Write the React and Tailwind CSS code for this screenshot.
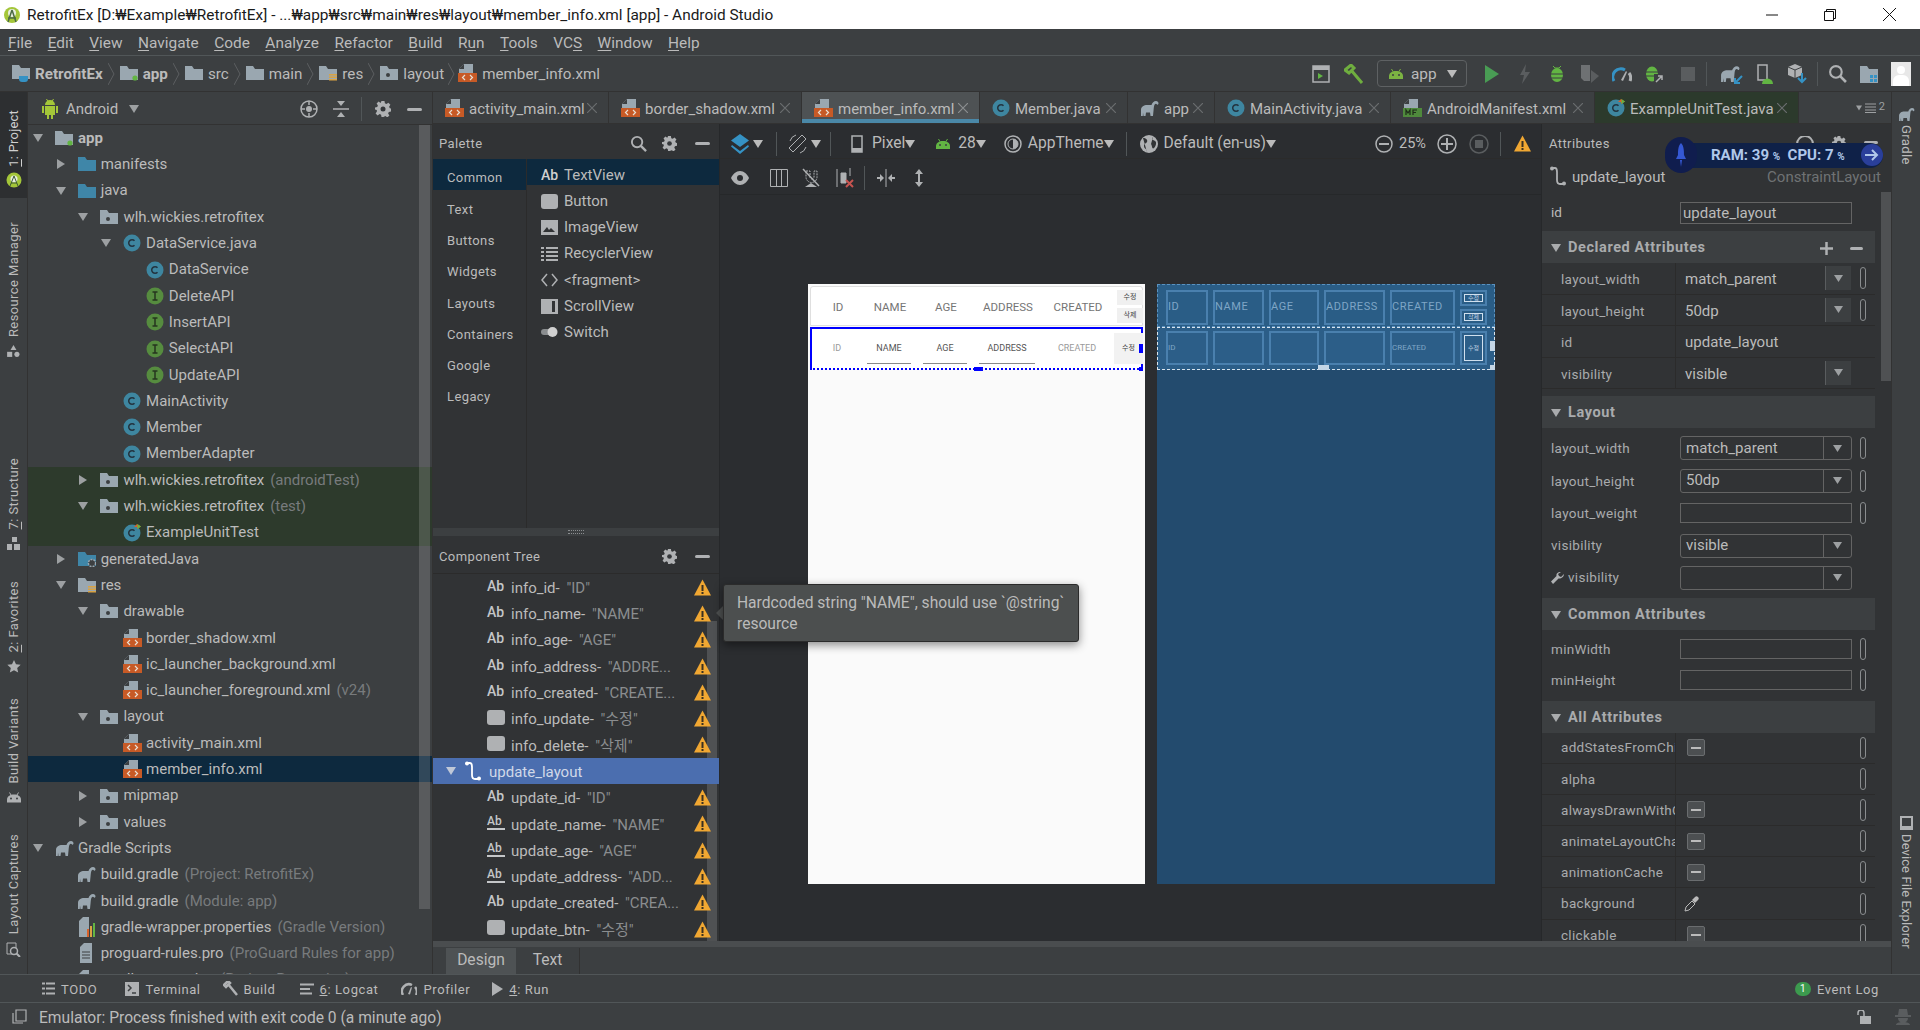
import { Fragment } from 'react'

const FONT = "font-['Roboto','Noto_Sans_CJK_KR',sans-serif]"

function Caret({ dir = 'down', c = '#9da0a2', s = 10 }) {
  return (
    <svg width={s} height={s} viewBox="0 0 10 10" className="shrink-0">
      <path d={dir === 'down' ? 'M0 1h10L5 9z' : 'M1 0v10l8-5z'} fill={c} />
    </svg>
  )
}

function Folder({ c = '#9aa7b0', dot, sub }) {
  return (
    <svg width="18" height="16" viewBox="0 0 18 16" className="shrink-0">
      <path d="M0 1h7l2 3h9v11H0z" fill={c} />
      {dot && <circle cx="8" cy="10" r="2" fill="#3c3f41" />}
      {sub === 'green' && <circle cx="15" cy="13" r="2.6" fill="#62b543" />}
      {sub === 'res' && <path d="M10 9h8v1.5h-8zM10 11.5h8V13h-8zM10 14h8v1.5h-8z" fill="#d9a343" />}
      {sub === 'gear' && <circle cx="14" cy="12" r="3.6" fill="#3c3f41" stroke="#9aa7b0" strokeWidth="1.5" strokeDasharray="2 1" />}
    </svg>
  )
}

function Xml() {
  return (
    <svg width="19" height="18" viewBox="0 0 19 18" className="shrink-0">
      <path d="M6 0h9v9H1V5z" fill="#9aa7b0" />
      <path d="M6 0v5H1z" fill="#3c3f41" />
      <rect y="9" width="19" height="9" fill="#c75a26" />
      <path d="M7 11l-2.500 2.500L7 16M12 11l2.500 2.500L12 16" fill="none" stroke="#e9e0d5" strokeWidth="1.200" />
    </svg>
  )
}

function Manifest() {
  return (
    <svg width="19" height="18" viewBox="0 0 19 18" className="shrink-0">
      <path d="M6 0h9v9H1V5z" fill="#9aa7b0" />
      <path d="M6 0v5H1z" fill="#3c3f41" />
      <rect y="9" width="19" height="9" fill="#4f8a3c" />
      <path d="M3 16v-5l2 3 2-3v5M10 16v-5h4M10 13.500h3" fill="none" stroke="#1e2c1a" strokeWidth="1.200" />
    </svg>
  )
}

function ClassIcon({ test }) {
  return (
    <svg width="18" height="18" viewBox="0 0 18 18" className="shrink-0">
      <circle cx="9" cy="9" r="8.500" fill="#3e86a0" />
      <path d="M11.500 6.800A3.300 3.300 0 1 0 11.500 11.200" fill="none" stroke="#23343f" strokeWidth="1.500" />
      {test && <path d="M11 3l3-3v3zM14 0l4 2.500L14 5z" fill="#d9622b" />}
      {test && <path d="M14.500 0l3.500 2.500-3.500 2.500z" fill="#62b543" />}
    </svg>
  )
}

function InterfaceIcon() {
  return (
    <svg width="18" height="18" viewBox="0 0 18 18" className="shrink-0">
      <circle cx="9" cy="9" r="8.500" fill="#568c3f" />
      <path d="M6.500 5h5M6.500 13h5M9 5v8" fill="none" stroke="#26351f" strokeWidth="1.500" />
    </svg>
  )
}

function Gradle({ c = '#9aa7b0', w = 19, h = 16 }) {
  return (
    <svg width={w} height={h} viewBox="0 0 19 16" className="shrink-0">
      <path d="M1 16V10C1 6.500 4 5 7 5h4.500C12 3 14 1 16 1c1.500 0 2.500 1 2.500 2.300 0 1-.7 1.700-1.400 1.400-.5-1.300-1.800-1.300-2.600 0-.8 1.500-.6 4.300-1.500 11.300h-2.500l-.5-3.500H6L5.500 16h-2L3 12.500 2.800 16z" fill={c} />
    </svg>
  )
}

function Android({ c = '#7cb342', w = 16, h = 10 }) {
  return (
    <svg width={w} height={h} viewBox="0 0 16 10" className="shrink-0">
      <path d="M1 10V7c0-3 3-5 7-5s7 2 7 5v3z" fill={c} />
      <path d="M3.500 0l1.500 2.500M12.500 0L11 2.500" stroke={c} strokeWidth="1" />
      <circle cx="5" cy="6" r="1" fill="#3c3f41" />
      <circle cx="11" cy="6" r="1" fill="#3c3f41" />
    </svg>
  )
}

function AndroidBody() {
  return (
    <svg width="16" height="22" viewBox="0 0 16 22" className="shrink-0">
      <path d="M3 7a5 5 0 0 1 10 0zM3 8h10v9h-2v4H9v-4H7v4H5v-4H3zM0 8h2v7H0zM14 8h2v7h-2z" fill="#a4c639" />
      <path d="M4.500 1l1.500 2.500M11.500 1L10 3.500" stroke="#a4c639" />
    </svg>
  )
}

function FileIcon({ kind }) {
  if (kind === 'props') {
    return (
      <svg width="18" height="20" viewBox="0 0 18 20" className="shrink-0">
        <path d="M5 0h6v20H1V4z" fill="#9aa7b0" />
        <path d="M9 12h2v8H9z" fill="#d9622b" />
        <path d="M12 9h2v11h-2z" fill="#d9a343" />
        <path d="M15 6h2v14h-2z" fill="#62b543" />
      </svg>
    )
  }
  return (
    <svg width="18" height="20" viewBox="0 0 18 20" className="shrink-0">
      <path d="M6 0h8v20H2V4z" fill="#9aa7b0" />
      <path d="M4 9h8M4 12h8M4 15h8" stroke="#3c3f41" />
    </svg>
  )
}

function Warn({ s = 17 }) {
  return (
    <svg width={s} height={s} viewBox="0 0 17 17" className="shrink-0">
      <path d="M8.500 0.500L17 16.500H0z" fill="#f0a732" />
      <path d="M7.500 6h2v6h-2zM7.500 13h2v2h-2z" fill="#3a3020" />
    </svg>
  )
}

function Gear({ s = 16, c = '#afb1b3' }) {
  return (
    <svg width={s} height={s} viewBox="0 0 16 16" className="shrink-0">
      <path d="M6.500 0h3l.4 2.300 1.500.7 2-1.300 2 2-1.300 2 .7 1.500L16 7.500v3l-2.200.4-.7 1.500 1.300 2-2 2-2-1.300-1.500.7L8.500 16h-2l-.4-2.200-1.500-.7-2 1.300-2-2 1.300-2L1.800 9 0 8.500v-2l2.200-.4.7-1.500-1.300-2 2-2 2 1.300L6 1z" fill={c} />
      <circle cx="8" cy="8" r="2.500" fill="#34373a" />
    </svg>
  )
}

function Minus({ w = 15, c = '#afb1b3' }) {
  return <span className="block h-[3px] rounded-sm" style={{ width: w, background: c }} />
}

function Search({ s = 18, c = '#afb1b3' }) {
  return (
    <svg width={s} height={s} viewBox="0 0 18 18" className="shrink-0">
      <circle cx="7.500" cy="7.500" r="5.500" fill="none" stroke={c} strokeWidth="2" />
      <path d="M11.500 11.500L17 17" stroke={c} strokeWidth="2.500" />
    </svg>
  )
}

function Close({ c = '#6a6d6f' }) {
  return (
    <svg width="10" height="10" viewBox="0 0 10 10" className="shrink-0">
      <path d="M0 0l10 10M10 0L0 10" stroke={c} strokeWidth="1.200" />
    </svg>
  )
}

function Chevron() {
  return (
    <svg width="7" height="22" viewBox="0 0 7 22" className="shrink-0">
      <path d="M0 0l6 11-6 11" fill="none" stroke="#5c5f61" />
    </svg>
  )
}

function Constraint({ c = '#afb1b3' }) {
  return (
    <svg width="18" height="20" viewBox="0 0 18 20" className="shrink-0">
      <path d="M3 2h3c2 0 2 2 2 4v8c0 2 1 4 3 4h3" fill="none" stroke={c} strokeWidth="1.800" />
      <circle cx="3" cy="2.500" r="2" fill={c} />
      <circle cx="15" cy="17.500" r="2" fill={c} />
    </svg>
  )
}

const MENU = [
  ['', 'F', 'ile'], ['', 'E', 'dit'], ['', 'V', 'iew'], ['', 'N', 'avigate'], ['', 'C', 'ode'], ['', 'A', 'nalyze'],
  ['', 'R', 'efactor'], ['', 'B', 'uild'], ['R', 'u', 'n'], ['', 'T', 'ools'], ['VC', 'S', ''], ['', 'W', 'indow'], ['', 'H', 'elp'],
]

function TitleBar() {
  return (
    <div className="h-[29px] bg-white flex items-center shrink-0 text-[15.400px] text-[#1a1a1a]">
      <svg width="18" height="20" viewBox="0 0 18 20" className="ml-[3px] mr-[6px]">
        <circle cx="9" cy="10" r="8" fill="#a4c639" />
        <circle cx="9" cy="8" r="4" fill="#e8efe0" />
        <path d="M9 5l-4 12M9 5l4 12M5 13h8" stroke="#4c6b43" strokeWidth="1.500" fill="none" />
      </svg>
      <span className="pt-[2px]">RetrofitEx [D:₩Example₩RetrofitEx] - ...₩app₩src₩main₩res₩layout₩member_info.xml [app] - Android Studio</span>
      <div className="ml-auto flex items-center">
        <svg width="12" height="2" viewBox="0 0 12 2" className="mr-[46px]"><path d="M0 1h12" stroke="#111" /></svg>
        <svg width="12" height="12" viewBox="0 0 12 12" className="mr-[47px]">
          <path d="M.5 2.500h9v9h-9zM2.500 2.500v-2h9v9h-2" fill="none" stroke="#111" />
        </svg>
        <svg width="13" height="13" viewBox="0 0 13 13" className="mr-[24px]"><path d="M0 0l13 13M13 0L0 13" stroke="#111" /></svg>
      </div>
    </div>
  )
}

function MenuBar() {
  return (
    <div className="h-[27px] bg-[#3c3f41] border-b border-[#515658] flex items-center pl-[8px] pt-[3px] gap-[15.500px] text-[15.400px] text-[#bbbbbb] shrink-0">
      {MENU.map(m => (
        <span key={m[1] + m[2]}>{m[0]}<u className="underline-offset-2">{m[1]}</u>{m[2]}</span>
      ))}
    </div>
  )
}

function Crumb({ icon, label, bold, className = '' }) {
  return (
    <div className={'flex items-center ' + className}>
      {icon}
      <span className={'ml-[5px] pt-[2px] text-[15.200px] ' + (bold ? 'font-bold text-[#bbbbbb]' : 'text-[#bbbbbb]')}>{label}</span>
    </div>
  )
}

function ToolIcon({ className, children }) {
  return <div className={'flex items-center justify-center shrink-0 ' + className}>{children}</div>
}

function MainToolbar() {
  return (
    <div className="h-[36px] bg-[#3c3f41] border-b border-[#323232] flex items-center text-[#bbbbbb] shrink-0">
      <Crumb className="ml-[12px]" bold label="RetrofitEx" icon={
        <svg width="18" height="18" viewBox="0 0 18 18"><path d="M0 1h7l2 3h9v11H0z" fill="#9aa7b0" /><path d="M7 12h9v3a3 3 0 0 1-3 3h-3a3 3 0 0 1-3-3z" fill="#3592c4" /></svg>
      } />
      <div className="mx-[5px]"><Chevron /></div>
      <Crumb bold label="app" icon={<Folder sub="green" />} />
      <div className="mx-[5px]"><Chevron /></div>
      <Crumb label="src" icon={<Folder />} />
      <div className="mx-[5px]"><Chevron /></div>
      <Crumb label="main" icon={<Folder />} />
      <div className="ml-[5px] mr-[5px]"><Chevron /></div>
      <Crumb label="res" icon={<Folder sub="res" />} />
      <div className="mx-[5px]"><Chevron /></div>
      <Crumb label="layout" icon={<Folder dot />} />
      <div className="ml-[4px] mr-[3px]"><Chevron /></div>
      <Crumb label="member_info.xml" icon={<Xml />} />

      <div className="ml-auto flex items-center">
        <ToolIcon className="w-[33px]">
          <svg width="18" height="18" viewBox="0 0 18 18"><path d="M1 1h16v16H1z" fill="none" stroke="#afb1b3" strokeWidth="1.500" /><path d="M1 1h16v4H1z" fill="#afb1b3" /><path d="M6 8v6l5-3z" fill="#62b543" /></svg>
        </ToolIcon>
        <ToolIcon className="w-[33px]">
          <svg width="20" height="20" viewBox="0 0 20 20"><path d="M1 6l6-5 3 3-5 5zM7 6l11 13" fill="none" stroke="#6fae3f" strokeWidth="3" /></svg>
        </ToolIcon>
        <div className="ml-[7px] w-[90px] h-[27px] rounded-[4px] border border-[#5e6163] flex items-center pl-[10px]">
          <Android />
          <span className="ml-[7px] pt-[2px] text-[15.400px]">app</span>
          <span className="ml-auto mr-[9px]"><Caret c="#bbbbbb" /></span>
        </div>
        <ToolIcon className="w-[34px] ml-[8px]">
          <svg width="14" height="18" viewBox="0 0 14 18"><path d="M0 0v18l14-9z" fill="#499c54" /></svg>
        </ToolIcon>
        <ToolIcon className="w-[31px]">
          <svg width="12" height="20" viewBox="0 0 12 20"><path d="M7 0L1 11h4l-2 9 8-12H6z" fill="#5a5d5f" /></svg>
        </ToolIcon>
        <ToolIcon className="w-[34px]">
          <svg width="16" height="19" viewBox="0 0 16 19"><path d="M4 2l2 2h4l2-2" stroke="#62b543" fill="none" /><ellipse cx="8" cy="11" rx="6" ry="7" fill="#62b543" /><path d="M2 10h12M2 14h12" stroke="#3c3f41" /></svg>
        </ToolIcon>
        <ToolIcon className="w-[32px]">
          <svg width="19" height="20" viewBox="0 0 19 20"><path d="M0 1h9v16H3l-3-3z" fill="#6e7173" /><path d="M10 6l8 6-8 7z" fill="#5a5d5f" /></svg>
        </ToolIcon>
        <ToolIcon className="w-[32px]">
          <svg width="20" height="16" viewBox="0 0 20 16"><path d="M2 15a8 8 0 0 1 11-11" fill="none" stroke="#3592c4" strokeWidth="3" /><path d="M17 7a8 8 0 0 1 1 8" fill="none" stroke="#afb1b3" strokeWidth="3" /><path d="M9 14l5-9 1 1-4 9z" fill="#afb1b3" /></svg>
        </ToolIcon>
        <ToolIcon className="w-[33px]">
          <svg width="20" height="20" viewBox="0 0 20 20"><ellipse cx="7" cy="10" rx="6" ry="7.500" fill="#62b543" /><path d="M1 8h12M1 12h12" stroke="#3c3f41" /><path d="M9 10h9v9H9z" fill="#3c3f41" /><path d="M11 18l6-6M13 12h4v4" stroke="#afb1b3" strokeWidth="1.500" fill="none" /></svg>
        </ToolIcon>
        <ToolIcon className="w-[33px]"><span className="block w-[14px] h-[14px] bg-[#5a5d5f]" /></ToolIcon>
        <span className="w-px h-[24px] bg-[#515658] ml-[2px] mr-[5px]" />
        <ToolIcon className="w-[36px]">
          <div className="relative"><Gradle w={20} h={17} /><svg width="10" height="10" viewBox="0 0 10 10" className="absolute right-[-3px] bottom-[-3px]"><path d="M9 1L2 8M2 3v5h5" fill="none" stroke="#3592c4" strokeWidth="2" /></svg></div>
        </ToolIcon>
        <ToolIcon className="w-[33px]">
          <svg width="18" height="20" viewBox="0 0 18 20"><path d="M2 1h9v15H2z" fill="none" stroke="#afb1b3" strokeWidth="1.500" /><path d="M6 20a5.500 5.500 0 0 1 11 0z" fill="#62b543" /></svg>
        </ToolIcon>
        <ToolIcon className="w-[33px]">
          <svg width="19" height="20" viewBox="0 0 19 20"><path d="M7 0l7 3v8l-7 3-7-3V3z" fill="#afb1b3" /><path d="M7 6v8M0 3l7 3 7-3" stroke="#3c3f41" fill="none" /><path d="M14 9v9M10 14l4 4 4-4" stroke="#3592c4" strokeWidth="2" fill="none" /></svg>
        </ToolIcon>
        <span className="w-px h-[24px] bg-[#515658] mx-[3px]" />
        <ToolIcon className="w-[33px]"><Search s={19} /></ToolIcon>
        <ToolIcon className="w-[30px]">
          <svg width="18" height="18" viewBox="0 0 18 18"><path d="M0 1h7l2 3h9v14H0z" fill="#9aa7b0" /><path d="M10 10h3v3h-3zM14 10h3v3h-3zM10 14h3v3h-3zM14 14h3v3h-3z" fill="#3592c4" /></svg>
        </ToolIcon>
        <div className="ml-[7px] mr-[9px] w-[20px] h-[24px] bg-[#e8e8e8] relative overflow-hidden">
          <span className="absolute left-[6px] top-[4px] w-[8px] h-[8px] rounded-full bg-white" />
          <span className="absolute left-[2px] top-[13px] w-[16px] h-[12px] rounded-t-md bg-white" />
        </div>
      </div>
    </div>
  )
}

function VLabel({ icon, label, className }) {
  return (
    <div className={'flex flex-col-reverse items-center gap-[8px] ' + className}>
      {icon}
      <span className="[writing-mode:vertical-rl] rotate-180 text-[13px] tracking-[.4px] text-[#bbbbbb] leading-none whitespace-nowrap">{label}</span>
    </div>
  )
}

function LeftStrip() {
  return (
    <div className="w-[28px] shrink-0 bg-[#3c3f41] border-r border-[#323232] flex flex-col">
      <div className="h-[106px] bg-[#2d2f31] flex flex-col-reverse items-center pb-[10px] gap-[5px]">
        <svg width="16" height="16" viewBox="0 0 16 16">
          <circle cx="8" cy="8" r="7.500" fill="#a4c639" /><circle cx="8" cy="7" r="3.500" fill="#e8efe0" /><path d="M8 4l-4 10M8 4l4 10M5 11h6" stroke="#3c5a33" fill="none" />
        </svg>
        <span className="[writing-mode:vertical-rl] rotate-180 text-[13px] tracking-[.2px] text-[#d0d0d0] leading-none"><u>1</u>: Project</span>
      </div>
      <VLabel className="mt-[24px] h-[135px]" label="Resource Manager" icon={
        <svg width="15" height="14" viewBox="0 0 15 14"><path d="M7.500 0l3.500 6H4z" fill="#afb1b3" /><path d="M0 8h6v6H0z" fill="#afb1b3" /><circle cx="11.500" cy="11" r="3" fill="#afb1b3" /></svg>
      } />
      <VLabel className="mt-[97px] h-[97px]" label={<Fragment><u>7</u>: Structure</Fragment>} icon={
        <svg width="14" height="14" viewBox="0 0 14 14"><path d="M5 0h5v5H5zM0 7h5v6H0zM7 7h6v6H7z" fill="#afb1b3" /></svg>
      } />
      <VLabel className="mt-[30px] h-[92px]" label={<Fragment><u>2</u>: Favorites</Fragment>} icon={
        <svg width="16" height="15" viewBox="0 0 16 15"><path d="M8 0l2.400 5.200 5.600.6-4.200 3.700 1.200 5.500L8 12.200 3 15l1.200-5.500L0 5.800l5.600-.6z" fill="#afb1b3" /></svg>
      } />
      <VLabel className="mt-[20px] h-[110px]" label="Build Variants" icon={<Android c="#afb1b3" w={16} h={11} />} />
      <VLabel className="mt-[28px] h-[126px]" label="Layout Captures" icon={
        <svg width="15" height="15" viewBox="0 0 15 15"><path d="M1 1h9v11H1z" fill="none" stroke="#afb1b3" /><circle cx="8" cy="9" r="3.500" fill="#3c3f41" stroke="#afb1b3" strokeWidth="1.500" /><path d="M10.500 11.500L14 15" stroke="#afb1b3" strokeWidth="2" /></svg>
      } />
    </div>
  )
}

const TREE = [
  { d: 0, a: 'down', i: 'appf', t: 'app', b: true },
  { d: 1, a: 'right', i: 'blue', t: 'manifests' },
  { d: 1, a: 'down', i: 'blue', t: 'java' },
  { d: 2, a: 'down', i: 'pkg', t: 'wlh.wickies.retrofitex' },
  { d: 3, a: 'down', i: 'c', t: 'DataService.java' },
  { d: 4, i: 'c', t: 'DataService' },
  { d: 4, i: 'in', t: 'DeleteAPI' },
  { d: 4, i: 'in', t: 'InsertAPI' },
  { d: 4, i: 'in', t: 'SelectAPI' },
  { d: 4, i: 'in', t: 'UpdateAPI' },
  { d: 3, i: 'c', t: 'MainActivity' },
  { d: 3, i: 'c', t: 'Member' },
  { d: 3, i: 'c', t: 'MemberAdapter' },
  { d: 2, a: 'right', i: 'pkg', t: 'wlh.wickies.retrofitex', h: '(androidTest)', g: true },
  { d: 2, a: 'down', i: 'pkg', t: 'wlh.wickies.retrofitex', h: '(test)', g: true },
  { d: 3, i: 'ct', t: 'ExampleUnitTest', g: true },
  { d: 1, a: 'right', i: 'gen', t: 'generatedJava' },
  { d: 1, a: 'down', i: 'res', t: 'res' },
  { d: 2, a: 'down', i: 'pkg', t: 'drawable' },
  { d: 3, i: 'xml', t: 'border_shadow.xml' },
  { d: 3, i: 'xml', t: 'ic_launcher_background.xml' },
  { d: 3, i: 'xml', t: 'ic_launcher_foreground.xml', h: '(v24)' },
  { d: 2, a: 'down', i: 'pkg', t: 'layout' },
  { d: 3, i: 'xml', t: 'activity_main.xml' },
  { d: 3, i: 'xml', t: 'member_info.xml', sel: true },
  { d: 2, a: 'right', i: 'pkg', t: 'mipmap' },
  { d: 2, a: 'right', i: 'pkg', t: 'values' },
  { d: 0, a: 'down', i: 'gr', t: 'Gradle Scripts' },
  { d: 1, i: 'gr', t: 'build.gradle', h: '(Project: RetrofitEx)' },
  { d: 1, i: 'gr', t: 'build.gradle', h: '(Module: app)' },
  { d: 1, i: 'props', t: 'gradle-wrapper.properties', h: '(Gradle Version)' },
  { d: 1, i: 'file', t: 'proguard-rules.pro', h: '(ProGuard Rules for app)' },
  { d: 1, i: 'props', t: 'gradle.properties', h: '(Project Properties)' },
]

function TreeIcon({ i }) {
  if (i === 'appf') return <Folder sub="green" />
  if (i === 'blue') return <Folder c="#3f86a8" />
  if (i === 'pkg') return <Folder dot />
  if (i === 'c') return <ClassIcon />
  if (i === 'ct') return <ClassIcon test />
  if (i === 'in') return <InterfaceIcon />
  if (i === 'gen') return <Folder c="#3f86a8" sub="gear" />
  if (i === 'res') return <Folder sub="res" />
  if (i === 'xml') return <Xml />
  if (i === 'gr') return <Gradle />
  return <FileIcon kind={i} />
}

function ProjectPanel() {
  return (
    <div className="w-[405px] shrink-0 bg-[#3c3f41] border-r border-[#323232] flex flex-col overflow-hidden">
      <div className="h-[33px] shrink-0 border-b border-[#323232] flex items-center pt-[2px] text-[#bbbbbb]">
        <span className="ml-[14px]"><AndroidBody /></span>
        <span className="ml-[8px] text-[15px]">Android</span>
        <span className="ml-[11px]"><Caret /></span>
        <svg width="18" height="18" viewBox="0 0 18 18" className="ml-[161px]">
          <circle cx="9" cy="9" r="8" fill="none" stroke="#afb1b3" strokeWidth="1.500" /><circle cx="9" cy="9" r="3" fill="#afb1b3" /><path d="M9 1v4M9 13v4M1 9h4M13 9h4" stroke="#afb1b3" strokeWidth="1.500" />
        </svg>
        <svg width="16" height="18" viewBox="0 0 16 18" className="ml-[15px]">
          <path d="M0 9h16" stroke="#afb1b3" strokeWidth="1.500" /><path d="M4 1h8L8 6zM4 17h8l-4-5z" fill="#afb1b3" />
        </svg>
        <span className="w-px h-[24px] bg-[#515658] ml-[12px]" />
        <span className="ml-[13px]"><Gear /></span>
        <span className="ml-[16px]"><Minus /></span>
      </div>
      <div className="relative flex-1 overflow-hidden">
        {TREE.map((r, idx) => (
          <div
            key={idx}
            className={'h-[26.300px] flex items-center text-[15px] whitespace-nowrap ' + (r.sel ? 'bg-[#0d293e]' : r.g ? 'bg-[#2d3a2c]' : '')}
            style={{ paddingLeft: r.d * 22.7 }}
          >
            <span className="w-[20px] flex justify-center shrink-0">{r.a && <Caret dir={r.a} />}</span>
            <span className="ml-[7px] w-[18px] flex justify-center shrink-0"><TreeIcon i={r.i} /></span>
            <span className={'ml-[5px] ' + (r.b ? 'font-bold text-[#bbbbbb]' : 'text-[#bbbbbb]')}>{r.t}</span>
            {r.h && <span className="ml-[6px] text-[#787b7d]">{r.h}</span>}
          </div>
        ))}
        <div className="absolute right-[2px] top-0 w-[11px] h-[784px] bg-white/15" />
      </div>
    </div>
  )
}

function Tab({ icon, label, w, active, test, close = '#6a6d6f' }) {
  return (
    <div className={'relative h-full flex items-center pl-[12px] pr-[11px] border-r border-[#323232] shrink-0 ' + w + ' ' + (active ? 'bg-[#4e5254]' : test ? 'bg-[#2c3a2c]' : '')}>
      {icon}
      <span className="ml-[5px] pt-[4px] text-[15px] text-[#bbbbbb] whitespace-nowrap">{label}</span>
      <span className="ml-auto"><Close c={close} /></span>
      {active && <span className="absolute left-0 right-0 bottom-0 h-[4px] bg-[#4a88a8]" />}
    </div>
  )
}

function Tabs() {
  return (
    <div className="h-[32px] shrink-0 bg-[#3c3f41] border-b border-[#323232] flex items-center">
      <Tab w="w-[176px]" icon={<Xml />} label="activity_main.xml" />
      <Tab w="w-[193px]" icon={<Xml />} label="border_shadow.xml" />
      <Tab w="w-[178px]" icon={<Xml />} label="member_info.xml" active close="#8b8e90" />
      <Tab w="w-[148px]" icon={<ClassIcon />} label="Member.java" />
      <Tab w="w-[87px]" icon={<Gradle />} label="app" />
      <Tab w="w-[176px]" icon={<ClassIcon />} label="MainActivity.java" />
      <Tab w="w-[204px]" icon={<Manifest />} label="AndroidManifest.xml" />
      <Tab w="w-[204px]" icon={<ClassIcon test />} label="ExampleUnitTest.java" test />
      <div className="ml-auto mr-[6px] flex items-center gap-[3px] text-[11px] text-[#9da0a2]">
        <Caret s={6} />
        <svg width="11" height="10" viewBox="0 0 11 10"><path d="M0 1h11M0 4h11M0 7h11M0 9.500h11" stroke="#9da0a2" /></svg>
        <span>2</span>
      </div>
    </div>
  )
}

const CATS = ['Common', 'Text', 'Buttons', 'Widgets', 'Layouts', 'Containers', 'Google', 'Legacy']

function BtnIcon() {
  return <span className="block w-[17px] h-[15px] rounded-[3px] bg-[#afb1b3] shrink-0" />
}

const PALETTE = [
  { t: 'TextView', sel: true, icon: <span className="font-medium text-[#d0d0d0] text-[14px] w-[17px]">Ab</span> },
  { t: 'Button', icon: <BtnIcon /> },
  { t: 'ImageView', icon: <svg width="17" height="15" viewBox="0 0 17 15"><path d="M0 0h17v15H0z" fill="#afb1b3" /><path d="M2 12l4-5 2 3 2-2 4 4z" fill="#313335" /></svg> },
  { t: 'RecyclerView', icon: <svg width="17" height="14" viewBox="0 0 17 14"><path d="M0 1h3M5 1h12M0 5h3M5 5h12M0 9h3M5 9h12M0 13h3M5 13h12" stroke="#afb1b3" strokeWidth="2" /></svg> },
  { t: '<fragment>', icon: <svg width="17" height="14" viewBox="0 0 17 14"><path d="M6 1L1 7l5 6M11 1l5 6-5 6" fill="none" stroke="#afb1b3" strokeWidth="1.500" /></svg> },
  { t: 'ScrollView', icon: <svg width="17" height="15" viewBox="0 0 17 15"><path d="M0 0h17v15H0z" fill="#afb1b3" /><path d="M11 2h3v11h-3z" fill="#313335" /></svg> },
  { t: 'Switch', icon: <svg width="17" height="12" viewBox="0 0 17 12"><rect y="3" width="12" height="6" rx="3" fill="#8a8d8f" /><circle cx="11.500" cy="6" r="5" fill="#d0d0d0" /></svg> },
]

function Palette() {
  return (
    <div className="h-[404px] shrink-0 flex flex-col bg-[#313335]">
      <div className="h-[35px] shrink-0 flex items-center pl-[6px] pr-[9px] pt-[4px] text-[13px] tracking-[.4px] text-[#bbbbbb]">
        Palette
        <span className="ml-auto"><Search s={17} /></span>
        <span className="ml-[15px]"><Gear s={15} /></span>
        <span className="ml-[18px]"><Minus w={15} /></span>
      </div>
      <div className="flex flex-1">
        <div className="w-[94px] border-r border-[#2b2b2b] text-[13px] tracking-[.4px] text-[#bbbbbb]">
          {CATS.map((c, i) => (
            <div key={c} className={'h-[31.300px] flex items-center pl-[14px] pt-[7px] ' + (i === 0 ? 'bg-[#0d293e]' : '')}>{c}</div>
          ))}
        </div>
        <div className="flex-1">
          {PALETTE.map(p => (
            <div key={p.t} className={'h-[26.200px] flex items-center pl-[14px] pt-[6px] gap-[6px] text-[15px] text-[#bbbbbb] ' + (p.sel ? 'bg-[#0d293e]' : '')}>
              {p.icon}
              <span>{p.t}</span>
            </div>
          ))}
        </div>
      </div>
    </div>
  )
}

const COMP = [
  { k: 'ab', t: 'info_id', v: '"ID"' },
  { k: 'ab', t: 'info_name', v: '"NAME"' },
  { k: 'ab', t: 'info_age', v: '"AGE"' },
  { k: 'ab', t: 'info_address', v: '"ADDRE...' },
  { k: 'ab', t: 'info_created', v: '"CREATE...' },
  { k: 'btn', t: 'info_update', v: '"수정"' },
  { k: 'btn', t: 'info_delete', v: '"삭제"' },
  { k: 'sel', t: 'update_layout' },
  { k: 'ab', t: 'update_id', v: '"ID"' },
  { k: 'abu', t: 'update_name', v: '"NAME"' },
  { k: 'abu', t: 'update_age', v: '"AGE"' },
  { k: 'abu', t: 'update_address', v: '"ADD...' },
  { k: 'ab', t: 'update_created', v: '"CREA...' },
  { k: 'btn', t: 'update_btn', v: '"수정"' },
]

function CompIcon({ k }) {
  if (k === 'btn') return <span className="block w-[18px] h-[15px] rounded-[3px] bg-[#afb1b3]" />
  if (k === 'abu') return (
    <span className="block w-[18px] text-[12px] font-medium leading-[14px] text-[#c4c6c8] border-b-2 border-[#c4c6c8]">Ab</span>
  )
  return <span className="block text-[14px] font-medium leading-none text-[#c4c6c8]">Ab</span>
}

function ComponentTree() {
  return (
    <div className="flex-1 flex flex-col bg-[#313335] min-h-0">
      <div className="h-[38px] shrink-0 border-b border-[#2b2b2b] flex items-center pl-[6px] pr-[9px] pt-[4px] text-[13px] tracking-[.4px] text-[#bbbbbb]">
        Component Tree
        <span className="ml-auto"><Gear s={15} /></span>
        <span className="ml-[18px]"><Minus w={15} /></span>
      </div>
      <div className="relative flex-1 overflow-hidden">
        <div className="absolute right-[2px] top-[47px] bottom-0 w-[10px] bg-white/15" />
        {COMP.map(c => (
          c.k === 'sel' ? (
            <div key={c.t} className="relative h-[26.300px] bg-[#4b6eaf] flex items-center text-[15px] text-[#d0d8e8]">
              <span className="ml-[13px]"><Caret c="#c0c8d8" /></span>
              <span className="ml-[8px]"><Constraint c="#ffffff" /></span>
              <span className="ml-[7px] pt-[2px]">{c.t}</span>
            </div>
          ) : (
            <div key={c.t} className="relative h-[26.300px] flex items-center text-[15px] text-[#bbbbbb] whitespace-nowrap">
              <span className="ml-[54px] w-[24px] shrink-0 flex items-center -mt-[3px]"><CompIcon k={c.k} /></span>
              <span className="pt-[2px]">{c.t}- <span className="ml-[3px] text-[#8a8d8f]">{c.v}</span></span>
              <span className="absolute left-[261px]"><Warn /></span>
            </div>
          )
        ))}
      </div>
    </div>
  )
}

const GRID_DEV = 'grid grid-cols-[54px_50px_62px_62px_78px_27px] items-center text-center'

function Device() {
  return (
    <div className="relative w-[337px] h-[600px] bg-[#fafafa] pt-[2px] px-[2px]">
      <div className={GRID_DEV + ' h-[40px] bg-white border border-[#dfdfdf] rounded-t-[3px] text-[11.500px] text-[#757575]'}>
        <span className="pt-[4px]">ID</span><span className="pt-[4px]">NAME</span><span className="pt-[4px]">AGE</span><span className="pt-[4px]">ADDRESS</span><span className="pt-[4px]">CREATED</span>
        <div className="flex flex-col gap-[3px] pr-[1px]">
          <span className="h-[15px] bg-[#f0f0f0] text-[7px] leading-[15px] text-[#444]">수정</span>
          <span className="h-[15px] bg-[#f0f0f0] text-[7px] leading-[15px] text-[#444]">삭제</span>
        </div>
      </div>
      <div className="relative mt-[1px] h-[42px] border-2 border-[#0000ff] border-b-0 bg-white">
        <div className={GRID_DEV + ' h-[39px] text-[9px] text-[#555] -ml-[2px]'}>
          <span className="text-[#9a9a9a]">ID</span>
          <span className="mx-[3px] pt-[9px] pb-[7px] border-b border-[#888]">NAME</span>
          <span className="mx-[9px] pt-[9px] pb-[7px] border-b border-[#888]">AGE</span>
          <span className="mx-[3px] pt-[9px] pb-[7px] border-b border-[#888]">ADDRESS</span>
          <span className="text-[#9a9a9a]">CREATED</span>
          <span className="h-[31px] -ml-[2px] bg-[#f2f2f2] text-[7px] leading-[31px] text-[#444]">수정</span>
        </div>
        <div className="absolute left-[-2px] right-[-2px] bottom-[-1px] border-b-2 border-dotted border-[#0000ff]" />
        <span className="absolute right-[-2px] top-[15px] w-[4px] h-[9px] bg-[#0000ff]" />
        <span className="absolute left-[162px] bottom-[-2px] w-[9px] h-[4px] bg-[#0000ff]" />
        <span className="absolute right-[-2px] bottom-[-2px] w-[4px] h-[4px] bg-[#0000ff]" />
      </div>
    </div>
  )
}

const GRID_BLUE = 'grid grid-cols-[42px_51px_50px_61px_65px_27px] gap-x-[5px] items-stretch'

function BlueBox({ children, small }) {
  return (
    <div className={'border-2 border-[#4a80ae] flex items-center overflow-hidden whitespace-nowrap text-[#7fa6c6] ' + (small ? 'text-[8px]' : 'text-[11px] tracking-[.6px]')}>
      {children}
    </div>
  )
}

function MiniBtn({ label, h }) {
  return (
    <span className={'flex-1 border-2 border-[#4a80ae] p-[2px] flex ' + h}>
      <span className="flex-1 border border-[#d0e0ee] text-[6px] leading-none text-[#c4d6e6] flex items-center justify-center">{label}</span>
    </span>
  )
}

function Blueprint() {
  return (
    <div className="relative w-[338px] h-[600px] bg-[#234b6e]">
      <div className="h-[43px] bg-[#2a5d86] border border-dashed border-[#5a92c0] pl-[8px] pt-[5px] pb-[2px]">
        <div className={GRID_BLUE + ' h-[33px]'}>
          <BlueBox>ID</BlueBox><BlueBox>NAME</BlueBox><BlueBox>AGE</BlueBox><BlueBox>ADDRESS</BlueBox><BlueBox>CREATED</BlueBox>
          <div className="flex flex-col gap-[3px] border-0">
            <MiniBtn label="수정" />
            <MiniBtn label="삭제" />
          </div>
        </div>
      </div>
      <div className="relative h-[43px] bg-[#2c5e88] border border-dashed border-[#d8e4ee] pl-[8px] pt-[3px]">
        <div className={GRID_BLUE + ' h-[34px]'}>
          <BlueBox small>ID</BlueBox><BlueBox /><BlueBox /><BlueBox /><BlueBox small>CREATED</BlueBox>
          <MiniBtn label="수정" />
        </div>
        <span className="absolute right-[-1px] top-[13px] w-[5px] h-[10px] bg-[#c4d6e6]" />
        <span className="absolute left-[160px] bottom-[-1px] w-[11px] h-[5px] bg-[#c4d6e6]" />
        <span className="absolute right-[-1px] bottom-[-1px] w-[5px] h-[5px] bg-[#c4d6e6]" />
      </div>
    </div>
  )
}

function DesignBar() {
  return (
    <Fragment>
      <div className="h-[35px] shrink-0 border-b border-[#2b2b2b] flex items-center pt-[5px] text-[15.600px] text-[#bbbbbb]">
        <svg width="18" height="20" viewBox="0 0 18 20" className="ml-[11px]">
          <path d="M9 0l9 6.500-9 6.500-9-6.500z" fill="#3592c4" /><path d="M1 11l8 6 8-6 1 1.500L9 20 0 12.500z" fill="#3592c4" />
        </svg>
        <span className="ml-[4px]"><Caret c="#bbbbbb" /></span>
        <span className="w-px h-[24px] bg-[#515658] ml-[13px]" />
        <svg width="20" height="20" viewBox="0 0 20 20" className="ml-[11px]">
          <path d="M5 18L1 14 14 1l4 4zM2 7a9 9 0 0 1 6-6M18 13a9 9 0 0 1-6 6" fill="none" stroke="#afb1b3" />
        </svg>
        <span className="ml-[3px]"><Caret c="#bbbbbb" /></span>
        <span className="w-px h-[24px] bg-[#515658] ml-[9px]" />
        <svg width="12" height="18" viewBox="0 0 12 18" className="ml-[20px]"><path d="M1 1h10v16H1z" fill="none" stroke="#afb1b3" strokeWidth="1.500" /><path d="M1 13h10v4H1z" fill="#afb1b3" /></svg>
        <span className="ml-[9px]">Pixel</span>
        <Caret c="#bbbbbb" />
        <span className="ml-[20px]"><Android c="#62b543" /></span>
        <span className="ml-[7px]">28</span>
        <Caret c="#bbbbbb" />
        <svg width="18" height="18" viewBox="0 0 18 18" className="ml-[18px]"><circle cx="9" cy="9" r="8" fill="none" stroke="#afb1b3" strokeWidth="1.500" /><path d="M9 4a5 5 0 0 1 0 10z" fill="#afb1b3" /><circle cx="9" cy="9" r="5" fill="none" stroke="#afb1b3" /></svg>
        <span className="ml-[6px]">AppTheme</span>
        <Caret c="#bbbbbb" />
        <span className="w-px h-[24px] bg-[#515658] ml-[12px]" />
        <svg width="18" height="18" viewBox="0 0 18 18" className="ml-[13px]"><circle cx="9" cy="9" r="9" fill="#afb1b3" /><path d="M3 3c3 0 5 2 4 4s-3 1-3 4 3 2 3 6M13 2c-2 2 0 3 2 4s1 5-1 7-2-3-3-4" fill="#313335" /></svg>
        <span className="ml-[6px]">Default (en-us)</span>
        <Caret c="#bbbbbb" />
        <svg width="18" height="18" viewBox="0 0 18 18" className="ml-[99px]"><circle cx="9" cy="9" r="8" fill="none" stroke="#afb1b3" strokeWidth="1.500" /><path d="M4 9h10" stroke="#afb1b3" strokeWidth="2" /></svg>
        <span className="ml-[6px] text-[14.500px]">25%</span>
        <svg width="20" height="20" viewBox="0 0 20 20" className="ml-[11px]"><circle cx="10" cy="10" r="9" fill="none" stroke="#afb1b3" strokeWidth="1.500" /><path d="M4 10h12M10 4v12" stroke="#afb1b3" strokeWidth="2" /></svg>
        <svg width="20" height="20" viewBox="0 0 20 20" className="ml-[12px]"><circle cx="10" cy="10" r="9" fill="none" stroke="#5a5d5f" strokeWidth="1.500" /><path d="M6 6h8v8H6z" fill="#5a5d5f" /></svg>
        <span className="w-px h-[24px] bg-[#515658] ml-[11px]" />
        <span className="ml-[13px]"><Warn /></span>
      </div>
      <div className="h-[36px] shrink-0 border-b border-[#26282a] flex items-center pt-[2px]">
        <svg width="18" height="14" viewBox="0 0 18 14" className="ml-[11px]"><path d="M0 7c2-4 5-7 9-7s7 3 9 7c-2 4-5 7-9 7S2 11 0 7z" fill="#afb1b3" /><circle cx="9" cy="7" r="3" fill="#2b2d30" /></svg>
        <svg width="18" height="18" viewBox="0 0 18 18" className="ml-[21px]"><path d="M.5 .5h17v17H.5zM6.500 .5v17M11.500 .5v17" fill="none" stroke="#afb1b3" /></svg>
        <svg width="18" height="20" viewBox="0 0 18 20" className="ml-[14px]"><path d="M4 3h4v6a2 2 0 0 0 4 0V3h3v6a5 5 0 0 1-11 0z" fill="none" stroke="#afb1b3" strokeDasharray="2 1" /><path d="M1 1l16 17" stroke="#afb1b3" strokeWidth="1.500" /><path d="M3 19h12l-6-4z" fill="#afb1b3" /></svg>
        <svg width="18" height="20" viewBox="0 0 18 20" className="ml-[16px]"><path d="M1 1v18M5 5h5v10H5zM14 0v8" stroke="#afb1b3" fill="#afb1b3" /><path d="M10 12l7 7M17 12l-7 7" stroke="#c75450" strokeWidth="2" /></svg>
        <span className="w-px h-[24px] bg-[#515658] ml-[10px]" />
        <svg width="18" height="18" viewBox="0 0 18 18" className="ml-[12px]"><path d="M9 0v18" stroke="#afb1b3" /><path d="M0 8h3V5l4 4-4 4v-3H0zM18 8h-3V5l-4 4 4 4v-3h3z" fill="#afb1b3" /></svg>
        <svg width="10" height="18" viewBox="0 0 10 18" className="ml-[19px]"><path d="M4 5H1l4-5 4 5H6v8h3l-4 5-4-5h3z" fill="#afb1b3" /></svg>
      </div>
    </Fragment>
  )
}

function Pill() {
  return <span className="block w-[6px] h-[22px] rounded-[3px] border border-[#8a8d8f] shrink-0" />
}

function DeclRow({ label, value, drop }) {
  return (
    <div className="h-[31.500px] flex items-center border-b border-[#2b2b2b] text-[#bbbbbb]">
      <span className="w-[134px] pl-[19px] pt-[2px] h-full flex items-center border-r border-[#2b2b2b] text-[13.500px] tracking-[.3px] text-[#a9abad]">{label}</span>
      <span className="ml-[9px] pt-[2px] text-[15px]">{value}</span>
      {drop && <span className="absolute left-[283px] w-[26px] h-[24px] bg-[#3c3f41] border-l border-[#5a5d5f] flex items-center justify-center"><Caret s={9} c="#9da0a2" /></span>}
      {(label === 'layout_width' || label === 'layout_height') && <span className="absolute left-[318px]"><Pill /></span>}
    </div>
  )
}

function FieldRow({ label, value, combo, pill = true, wrench, className }) {
  return (
    <div className={'flex items-center relative text-[#bbbbbb] ' + className}>
      <span className="pl-[9px] w-[138px] flex items-center gap-[4px] text-[13.500px] tracking-[.3px] text-[#a9abad]">
        {wrench && (
          <svg width="13" height="12" viewBox="0 0 13 12"><path d="M13 2l-3 3-2-1-1-2 3-2c-3-.5-5 1.500-4.500 4L0 9.500 2 12l5.500-5.500C10 7 13 5 13 2z" fill="#afb1b3" /></svg>
        )}
        {label}
      </span>
      <div className={'w-[172px] flex items-center border border-[#646464] ' + (combo ? 'h-[24px] rounded-[3px]' : 'h-[20px]')}>
        <span className="pl-[5px] text-[15px] leading-none">{value}</span>
        {combo && (
          <span className="ml-auto w-[28px] h-full border-l border-[#646464] flex items-center justify-center"><Caret s={9} c="#9da0a2" /></span>
        )}
      </div>
      {pill && <span className="ml-[8px]"><Pill /></span>}
    </div>
  )
}

function SectionHead({ label, right }) {
  return (
    <div className="h-[32px] bg-[#3c3f41] flex items-center pl-[9px] pt-[2px] text-[14.500px] font-bold tracking-[.6px] text-[#a9abad] shrink-0">
      <Caret c="#a9abad" />
      <span className="ml-[7px]">{label}</span>
      {right}
    </div>
  )
}

const ALL = [
  ['addStatesFromChi', 'flag'], ['alpha', ''], ['alwaysDrawnWithC', 'flag'], ['animateLayoutCha', 'flag'],
  ['animationCache', 'flag'], ['background', 'pick'], ['clickable', 'flag'],
]

function AttributesPanel() {
  return (
    <div className="relative w-[350px] shrink-0 border-l border-[#26282a] bg-[#313335] flex flex-col overflow-hidden">
      <div className="h-[35px] shrink-0 flex items-center pl-[7px] pr-[17px] pt-[4px] text-[13px] tracking-[.4px] text-[#bbbbbb]">
        Attributes
      </div>
      <div className="h-[33px] shrink-0 flex items-center pl-[7px] pr-[10px] text-[#bbbbbb] text-[15px]">
        <Constraint />
        <span className="ml-[5px] pt-[4px]">update_layout</span>
        <span className="ml-auto pt-[4px] text-[#6f7274]">ConstraintLayout</span>
      </div>
      <div className="h-[39px] shrink-0 flex items-center pl-[9px] pt-[2px] text-[#bbbbbb]">
        <span className="w-[129px] text-[13.500px]">id</span>
        <div className="w-[172px] h-[22px] border border-[#646464] pl-[2px] text-[15px] leading-[20px]">update_layout</div>
      </div>
      <div className="w-[333px] flex flex-col flex-1 min-h-0">
        <SectionHead label="Declared Attributes" right={
          <div className="ml-auto mr-[12px] flex items-center gap-[17px]">
            <svg width="13" height="13" viewBox="0 0 13 13"><path d="M0 6.500h13M6.500 0v13" stroke="#afb1b3" strokeWidth="2.500" /></svg>
            <Minus w={13} />
          </div>
        } />
        <div className="relative h-[133px] shrink-0">
          <DeclRow label="layout_width" value="match_parent" drop />
          <DeclRow label="layout_height" value="50dp" drop />
          <DeclRow label="id" value="update_layout" />
          <DeclRow label="visibility" value="visible" drop />
        </div>
        <SectionHead label="Layout" />
        <div className="pt-[4px]">
          <FieldRow className="h-[32.500px]" label="layout_width" value="match_parent" combo />
          <FieldRow className="h-[32.500px]" label="layout_height" value="50dp" combo />
          <FieldRow className="h-[32.500px]" label="layout_weight" />
          <FieldRow className="h-[32px]" label="visibility" value="visible" combo pill={false} />
          <FieldRow className="h-[32px]" label="visibility" combo pill={false} wrench />
        </div>
        <div className="mt-[4px]"><SectionHead label="Common Attributes" /></div>
        <div className="pt-[4px]">
          <FieldRow className="h-[31px]" label="minWidth" />
          <FieldRow className="h-[31px]" label="minHeight" />
        </div>
        <div className="mt-[5px]"><SectionHead label="All Attributes" /></div>
        <div className="overflow-hidden flex-1">
          {ALL.map(([l, k]) => (
            <div key={l} className="h-[31.200px] flex items-center border-b border-[#2b2b2b] relative">
              <span className="w-[134px] h-full pl-[19px] flex items-center border-r border-[#2b2b2b] overflow-hidden whitespace-nowrap text-[13.500px] tracking-[.3px] text-[#a9abad]">{l}</span>
              {k === 'flag' && (
                <span className="ml-[11px] w-[18px] h-[17px] rounded-[2px] bg-[#4c4f51] border border-[#6a6d6f] flex items-center justify-center"><span className="block w-[10px] h-[2px] bg-[#bbbbbb]" /></span>
              )}
              {k === 'pick' && (
                <svg width="16" height="16" viewBox="0 0 16 16" className="ml-[8px]"><path d="M1 15l1-4 6-6 3 3-6 6z" fill="none" stroke="#bbbbbb" /><path d="M8 4l3-3c1-1 2-1 3 0s1 2 0 3l-3 3z" fill="#bbbbbb" /></svg>
              )}
              <span className="absolute left-[318px]"><Pill /></span>
            </div>
          ))}
        </div>
      </div>
      <div className="absolute left-[339px] top-[68px] w-[10px] h-[189px] bg-white/15" />
      <svg width="18" height="8" viewBox="0 0 18 8" className="absolute left-[254px] top-[12px]"><path d="M1 8a8 8 0 0 1 16 0" fill="none" stroke="#afb1b3" strokeWidth="2" /></svg>
      <span className="absolute left-[290px] top-[12px]"><Gear s={14} /></span>
      <span className="absolute left-[322px] top-[17px]"><Minus w={14} /></span>
      <div className="absolute left-[123px] top-[13px] w-[220px] h-[36px] flex items-center">
        <div className="absolute left-[8px] right-[2px] top-[6px] h-[25px] rounded-r-full bg-[#0f2148]" />
        <div className="relative w-[32px] h-[36px] rounded-full bg-[#101d4e] flex items-center justify-center">
          <svg width="10" height="24" viewBox="0 0 10 24"><path d="M5 0c3 3 3 8 3 12l2 4H0l2-4c0-4 0-9 3-12zM4 17h2l-1 7z" fill="#3558d4" /></svg>
        </div>
        <span className="relative ml-[14px] text-[15px] font-bold text-[#b0c8ea] whitespace-nowrap">RAM: 39 <span className="text-[10px]">%</span>&nbsp; CPU: 7 <span className="text-[10px]">%</span></span>
        <div className="relative ml-auto mr-[2px] w-[22px] h-[22px] rounded-full bg-[#2a3f9a] flex items-center justify-center">
          <svg width="14" height="12" viewBox="0 0 14 12"><path d="M0 6h12M7 1l5 5-5 5" fill="none" stroke="#b0c8ea" strokeWidth="2" /></svg>
        </div>
      </div>
    </div>
  )
}

function Center() {
  return (
    <div className="w-[1458px] shrink-0 flex flex-col relative">
      <Tabs />
      <div className="flex flex-1 min-h-0">
        <div className="w-[287px] shrink-0 flex flex-col border-r border-[#26282a]">
          <Palette />
          <div className="h-[8px] shrink-0 bg-[#3c3f41] flex items-center justify-center">
            <span className="w-[16px] h-[4px] border-y border-dotted border-[#8a8d8f]" />
          </div>
          <ComponentTree />
        </div>
        <div className="w-[821px] shrink-0 bg-[#2b2d30] flex flex-col">
          <DesignBar />
          <div className="flex pl-[88px] pt-[89px] gap-[12px]">
            <Device />
            <Blueprint />
          </div>
        </div>
        <AttributesPanel />
      </div>
      <div className="h-[6px] shrink-0 bg-[#4a4d4f]" />
      <div className="h-[27px] shrink-0 bg-[#3c3f41] flex items-stretch pt-px text-[15.600px] text-[#bbbbbb]">
        <span className="ml-[13px] w-[70px] flex items-center justify-center bg-[#4e5254]">Design</span>
        <span className="w-[64px] flex items-center justify-center border-r border-[#323232]">Text</span>
      </div>
      <div className="absolute left-[283px] top-[492px] flex items-center">
        <span className="w-0 h-0 border-y-[7px] border-y-transparent border-r-[7px] border-r-[#4c4f4f]" />
        <div className="w-[356px] h-[58px] bg-[#4c4f4f] rounded-[3px] border border-[#2b2b2b] shadow-[0_3px_10px_rgba(0,0,0,.45)] pl-[13px] pr-[10px] pt-[8px] text-[15.600px] leading-[21px] text-[#bbbbbb]">
          Hardcoded string "NAME", should use `@string` resource
        </div>
      </div>
    </div>
  )
}

function RightStrip() {
  return (
    <div className="w-[29px] shrink-0 bg-[#3c3f41] border-l border-[#323232] flex flex-col items-center">
      <div className="mt-[15px]"><Gradle w={17} h={14} /></div>
      <span className="mt-[4px] [writing-mode:vertical-rl] text-[13px] tracking-[.4px] text-[#bbbbbb] leading-none">Gradle</span>
      <svg width="13" height="14" viewBox="0 0 13 14" className="mt-[651px]"><path d="M1 1h11v12H1z" fill="none" stroke="#afb1b3" strokeWidth="2" /><path d="M1 10h11v3H1z" fill="#afb1b3" /></svg>
      <span className="mt-[4px] [writing-mode:vertical-rl] text-[13px] tracking-[.1px] text-[#bbbbbb] leading-none whitespace-nowrap">Device File Explorer</span>
    </div>
  )
}

function BottomTool({ icon, label, className }) {
  return (
    <div className={'flex items-center gap-[6px] ' + className}>
      {icon}
      <span className="pt-[2px] text-[13px] tracking-[.6px] text-[#bbbbbb] whitespace-nowrap">{label}</span>
    </div>
  )
}

function BottomBars() {
  return (
    <Fragment>
      <div className="h-[29px] shrink-0 bg-[#3c3f41] border-t border-b border-[#515658] flex items-center">
        <BottomTool className="ml-[42px]" label="TODO" icon={
          <svg width="13" height="13" viewBox="0 0 13 13"><path d="M0 1.500h3M4 1.500h9M0 6.500h3M4 6.500h9M0 11.500h3M4 11.500h9" stroke="#afb1b3" strokeWidth="2" /></svg>
        } />
        <BottomTool className="ml-[28px]" label="Terminal" icon={
          <svg width="14" height="14" viewBox="0 0 14 14"><path d="M0 0h14v14H0z" fill="#afb1b3" /><path d="M3 3l3 3-3 3M7 11h4" stroke="#3c3f41" strokeWidth="1.500" fill="none" /></svg>
        } />
        <BottomTool className="ml-[22px]" label="Build" icon={
          <svg width="15" height="15" viewBox="0 0 15 15"><path d="M1 4l4-4 2 2-4 4zM5 3l9 11" fill="none" stroke="#afb1b3" strokeWidth="2.500" /></svg>
        } />
        <BottomTool className="ml-[24px]" label={<Fragment><u>6</u>: Logcat</Fragment>} icon={
          <svg width="14" height="12" viewBox="0 0 14 12"><path d="M0 1.500h14M0 6h10M0 10.500h12" stroke="#afb1b3" strokeWidth="2" /></svg>
        } />
        <BottomTool className="ml-[23px]" label="Profiler" icon={
          <svg width="16" height="13" viewBox="0 0 16 13"><path d="M2 13a7 7 0 0 1 9-10M14 5a7 7 0 0 1 1 8" fill="none" stroke="#afb1b3" strokeWidth="2.500" /><path d="M7 12l3-7 1 .5-2 7z" fill="#afb1b3" /></svg>
        } />
        <BottomTool className="ml-[22px]" label={<Fragment><u>4</u>: Run</Fragment>} icon={
          <svg width="11" height="14" viewBox="0 0 11 14"><path d="M0 0v14l11-7z" fill="#afb1b3" /></svg>
        } />
        <div className="ml-auto mr-[41px] flex items-center gap-[6px]">
          <span className="w-[16px] h-[14px] rounded-full bg-[#3c9a4e] text-white text-[10px] leading-[14px] text-center">1</span>
          <span className="pt-[2px] text-[13px] tracking-[.6px] text-[#bbbbbb]">Event Log</span>
        </div>
      </div>
      <div className="h-[27px] shrink-0 bg-[#3c3f41] flex items-center">
        <svg width="15" height="15" viewBox="0 0 15 15" className="ml-[12px]"><path d="M4 1h10v11H4zM1 4v10h10" fill="none" stroke="#afb1b3" strokeWidth="1.200" /></svg>
        <span className="ml-[12px] pt-[4px] text-[15.600px] text-[#bbbbbb]">Emulator: Process finished with exit code 0 (a minute ago)</span>
        <svg width="14" height="14" viewBox="0 0 14 14" className="ml-auto"><path d="M1 5V3a3 3 0 0 1 6 0v3" fill="none" stroke="#afb1b3" strokeWidth="1.500" /><path d="M3 6h11v8H3z" fill="#afb1b3" /></svg>
        <svg width="16" height="16" viewBox="0 0 16 16" className="ml-[24px] mr-[9px]"><path d="M4 0h8l1 6h3v2H0V6h3zM3 9h10a5 5 0 0 1-10 0zM1 16c0-2 3-3 7-3s7 1 7 3z" fill="#5a5d5f" /></svg>
      </div>
    </Fragment>
  )
}

export default function App() {
  return (
    <div className={'w-[1920px] h-[1030px] overflow-hidden flex flex-col bg-[#3c3f41] ' + FONT}>
      <TitleBar />
      <MenuBar />
      <MainToolbar />
      <div className="flex flex-1 min-h-0">
        <LeftStrip />
        <ProjectPanel />
        <Center />
        <RightStrip />
      </div>
      <BottomBars />
    </div>
  )
}
